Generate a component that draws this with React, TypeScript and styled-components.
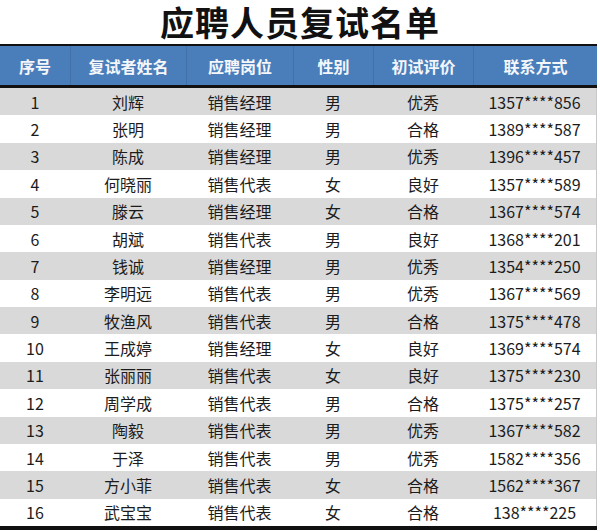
import React from "react";
import styled, { createGlobalStyle } from "styled-components";

const Global = createGlobalStyle`
  html, body { margin: 0; padding: 0; background: #ffffff; }
  body { font-family: "Noto Sans CJK SC", "Noto Sans", sans-serif; }
`;

const Page = styled.div`
  width: 600px;
  height: 531px;
  overflow: hidden;
  display: flex;
  flex-direction: column;
  background: #fff;
`;

const Title = styled.h1`
  margin: 0;
  height: 44px;
  text-align: center;
  font-size: 34px;
  font-weight: 700;
  color: #111;
  letter-spacing: 1px;
  line-height: 44px;
  overflow: visible;
`;

const Table = styled.div`
  width: 597px;
  display: flex;
  flex-direction: column;
  border-bottom: 4px solid #111;
`;

const cols = "70px 116px 107px 80px 100px 1fr";

const HeaderRow = styled.div`
  display: grid;
  grid-template-columns: ${cols};
  height: 39px;
  background: #4a7ebb;
  border-top: 2px solid #111;
  border-bottom: 3px solid #111;
`;

const HeaderCell = styled.div`
  display: flex;
  align-items: center;
  justify-content: center;
  color: #f4f6fa;
  font-size: 16px;
  font-weight: 700;
  border-left: 1px solid rgba(20, 40, 70, 0.15);
  &:first-child { border-left: none; }
`;

const Row = styled.div<{ $alt: boolean }>`
  display: grid;
  grid-template-columns: ${cols};
  height: 27.375px;
  background: ${(p) => (p.$alt ? "#d9d9d9" : "#ffffff")};
  border-right: 1px solid #c8c8c8;
`;

const Cell = styled.div`
  display: flex;
  align-items: center;
  justify-content: center;
  color: #1c1c1c;
  font-size: 16px;
  line-height: 1;
`;

const headers = ["序号", "复试者姓名", "应聘岗位", "性别", "初试评价", "联系方式"];

const rows: [string, string, string, string, string][] = [
  ["刘辉", "销售经理", "男", "优秀", "1357****856"],
  ["张明", "销售经理", "男", "合格", "1389****587"],
  ["陈成", "销售经理", "男", "优秀", "1396****457"],
  ["何晓丽", "销售代表", "女", "良好", "1357****589"],
  ["滕云", "销售经理", "女", "合格", "1367****574"],
  ["胡斌", "销售代表", "男", "良好", "1368****201"],
  ["钱诚", "销售经理", "男", "优秀", "1354****250"],
  ["李明远", "销售代表", "男", "优秀", "1367****569"],
  ["牧渔风", "销售代表", "男", "合格", "1375****478"],
  ["王成婷", "销售经理", "女", "良好", "1369****574"],
  ["张丽丽", "销售代表", "女", "良好", "1375****230"],
  ["周学成", "销售代表", "男", "合格", "1375****257"],
  ["陶毅", "销售代表", "男", "优秀", "1367****582"],
  ["于泽", "销售代表", "男", "优秀", "1582****356"],
  ["方小菲", "销售代表", "女", "合格", "1562****367"],
  ["武宝宝", "销售代表", "女", "合格", "138****225"],
];

export default function App() {
  return (
    <Page>
      <Global />
      <Title>应聘人员复试名单</Title>
      <Table>
        <HeaderRow>
          {headers.map((h) => (
            <HeaderCell key={h}>{h}</HeaderCell>
          ))}
        </HeaderRow>
        {rows.map((r, i) => (
          <Row key={i} $alt={i % 2 === 0}>
            <Cell>{i + 1}</Cell>
            {r.map((c, j) => (
              <Cell key={j}>{c}</Cell>
            ))}
          </Row>
        ))}
      </Table>
    </Page>
  );
}
